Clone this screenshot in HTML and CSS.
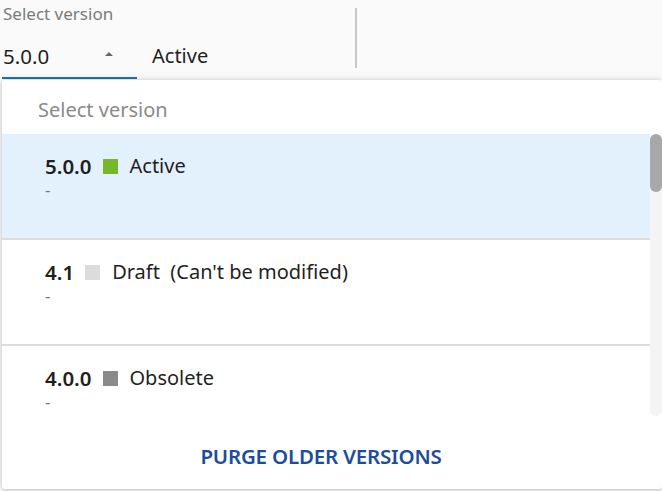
FILE: index.html
```html
<!DOCTYPE html>
<html>
<head>
<meta charset="utf-8">
<link rel="stylesheet" href="styles.css">
</head>
<body>
<div class="toolbar">
  <div class="select">
    <div class="select-label">Select version</div>
    <div class="select-value">
      <span class="value-version">5.0.0</span>
      <span class="caret"></span>
    </div>
  </div>
  <div class="select-status">Active</div>
  <div class="divider"></div>
</div>

<div class="dropdown">
  <div class="dropdown-header">Select version</div>
  <div class="list-wrap">
    <div class="list">
      <div class="item selected">
        <div class="item-line"><span class="ver">5.0.0</span><span class="sq sq-active"></span><span class="status">Active</span></div>
        <div class="desc">-</div>
      </div>
      <div class="item">
        <div class="item-line"><span class="ver">4.1</span><span class="sq sq-draft"></span><span class="status">Draft&nbsp; (Can't be modified)</span></div>
        <div class="desc">-</div>
      </div>
      <div class="item">
        <div class="item-line"><span class="ver">4.0.0</span><span class="sq sq-obsolete"></span><span class="status">Obsolete</span></div>
        <div class="desc">-</div>
      </div>
    </div>
    <div class="scroll-track"><div class="scroll-thumb"></div></div>
  </div>
  <div class="dropdown-footer">
    <button class="purge">PURGE OLDER VERSIONS</button>
  </div>
</div>
</body>
</html>
```

FILE: styles.css
```css
html, body {
  margin: 0;
  padding: 0;
}
body {
  width: 662px;
  height: 491px;
  overflow: hidden;
  background: #fafafa;
  font-family: "Noto Sans", "Open Sans", sans-serif;
  color: #1f1f1f;
  position: relative;
}

.toolbar {
  display: flex;
  align-items: flex-start;
  height: 80px;
}
.select {
  width: 135px;
  margin-left: 2px;
  height: 77px;
  border-bottom: 2px solid #1b73c2;
  box-sizing: content-box;
}
.select-label {
  font-size: 17px;
  color: #7a7a7a;
  padding-left: 1px;
  line-height: 20px;
  margin-top: 4px;
}
.select-value {
  display: flex;
  align-items: center;
  margin-top: 20px;
  height: 24px;
  padding-left: 1px;
}
.value-version {
  font-size: 20.5px;
  flex: 1;
}
.caret {
  width: 0;
  height: 0;
  border-left: 4px solid transparent;
  border-right: 4px solid transparent;
  border-bottom: 4px solid #666;
  margin-right: 24px;
  margin-bottom: 4px;
}
.select-status {
  font-size: 20px;
  margin-left: 15px;
  margin-top: 44px;
  line-height: 24px;
  width: 203px;
}
.divider {
  width: 2px;
  height: 60px;
  margin-top: 8px;
  background: #c8c8c8;
}

.dropdown {
  position: absolute;
  top: 80px;
  left: 2px;
  width: 660px;
  height: 409px;
  background: #fff;
  border-radius: 3px;
  box-shadow: 0 1px 4px rgba(0,0,0,0.25), 0 -3px 8px rgba(0,0,0,0.05);
  display: flex;
  flex-direction: column;
}
.dropdown-header {
  height: 54px;
  box-sizing: border-box;
  padding: 17px 0 0 36px;
  font-size: 20px;
  color: #8a8a8a;
  line-height: 26px;
}
.list-wrap {
  height: 282px;
  display: flex;
  flex-shrink: 0;
}
.list {
  flex: 1;
  overflow: hidden;
}
.scroll-track {
  width: 12px;
  background: #f4f4f4;
  border-radius: 6px;
}
.scroll-thumb {
  height: 58px;
  background: #a8a8a8;
  border-radius: 6px;
}
.item {
  height: 104px;
  border-bottom: 2px solid #dcdcdc;
  box-sizing: content-box;
  padding-left: 43px;
}
.item.selected {
  background: #e3f1fc;
}
.item-line {
  display: flex;
  align-items: center;
  padding-top: 18px;
  height: 28px;
  font-size: 20px;
  line-height: 28px;
}
.ver {
  font-weight: 600;
  font-size: 20.5px;
  margin-right: 11px;
}
.sq {
  width: 15px;
  height: 15px;
  margin-right: 12px;
}
.sq-active { background: #77b72a; }
.sq-draft { background: #dcdcdc; }
.sq-obsolete { background: #8a8a8a; }
.desc {
  font-size: 17px;
  color: #777;
  line-height: 18px;
  margin-top: 1px;
}

.dropdown-footer {
  flex: 1;
  display: flex;
  align-items: center;
  justify-content: center;
  padding-top: 6px;
}
.purge {
  border: none;
  background: none;
  font-family: "Noto Sans", "Open Sans", sans-serif;
  font-size: 20.5px;
  font-weight: 600;
  color: #1c4d9c;
  letter-spacing: -0.2px;
  padding: 0;
  margin-right: 22px;
}
```
